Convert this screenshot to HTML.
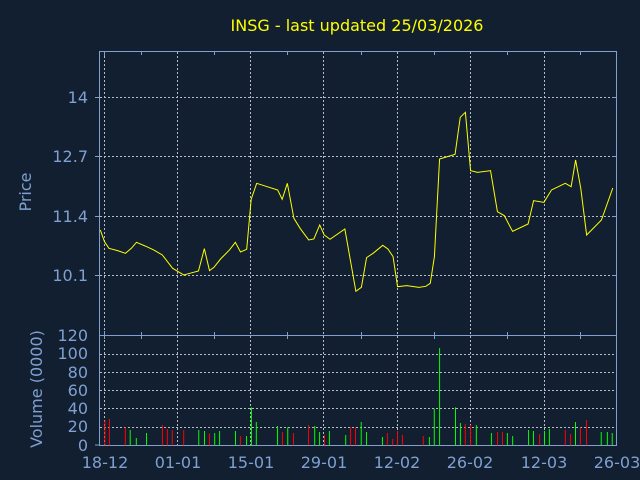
<!DOCTYPE html>
<html><head><meta charset="utf-8"><style>
html,body{margin:0;padding:0;background:#111f30;}
svg{display:block;}
text{font-family:"DejaVu Sans","Liberation Sans",sans-serif;}
</style></head><body>
<svg width="640" height="480" viewBox="0 0 640 480" xmlns="http://www.w3.org/2000/svg">
<rect width="640" height="480" fill="#111f30"/>
<text x="357" y="31" fill="#ffff00" font-size="16" text-anchor="middle">INSG - last updated 25/03/2026</text>
<!-- price grid -->
<g stroke="#b8bcc4" stroke-width="1" stroke-dasharray="2,2" fill="none">
<line x1="100" y1="97.5" x2="617" y2="97.5"/>
<line x1="100" y1="156.5" x2="617" y2="156.5"/>
<line x1="100" y1="216.5" x2="617" y2="216.5"/>
<line x1="100" y1="275.5" x2="617" y2="275.5"/>
<line x1="104.5" y1="52" x2="104.5" y2="335"/>
<line x1="177.5" y1="52" x2="177.5" y2="335"/>
<line x1="250.5" y1="52" x2="250.5" y2="335"/>
<line x1="323.5" y1="52" x2="323.5" y2="335"/>
<line x1="397.5" y1="52" x2="397.5" y2="335"/>
<line x1="470.5" y1="52" x2="470.5" y2="335"/>
<line x1="544.5" y1="52" x2="544.5" y2="335"/>
<line x1="100" y1="354.5" x2="617" y2="354.5"/>
<line x1="100" y1="372.5" x2="617" y2="372.5"/>
<line x1="100" y1="390.5" x2="617" y2="390.5"/>
<line x1="100" y1="408.5" x2="617" y2="408.5"/>
<line x1="100" y1="427.5" x2="617" y2="427.5"/>
<line x1="104.5" y1="320" x2="104.5" y2="445"/>
<line x1="177.5" y1="320" x2="177.5" y2="445"/>
<line x1="250.5" y1="320" x2="250.5" y2="445"/>
<line x1="323.5" y1="320" x2="323.5" y2="445"/>
<line x1="397.5" y1="320" x2="397.5" y2="445"/>
<line x1="470.5" y1="320" x2="470.5" y2="445"/>
<line x1="544.5" y1="320" x2="544.5" y2="445"/>
</g>
<rect x="99.5" y="51.5" width="517" height="284" fill="none" stroke="#7fa0d0" stroke-width="1"/>
<rect x="99.5" y="335.5" width="517" height="110" fill="none" stroke="#7fa0d0" stroke-width="1"/>
<g stroke="#7fa0d0" stroke-width="1">
<line x1="95" y1="97.5" x2="100" y2="97.5"/><line x1="95" y1="156.5" x2="100" y2="156.5"/><line x1="95" y1="216.5" x2="100" y2="216.5"/><line x1="95" y1="275.5" x2="100" y2="275.5"/>
<line x1="612" y1="97.5" x2="617" y2="97.5"/><line x1="612" y1="156.5" x2="617" y2="156.5"/><line x1="612" y1="216.5" x2="617" y2="216.5"/><line x1="612" y1="275.5" x2="617" y2="275.5"/>
<line x1="104.5" y1="52" x2="104.5" y2="56"/><line x1="141.5" y1="52" x2="141.5" y2="55"/><line x1="214.5" y1="52" x2="214.5" y2="55"/><line x1="287.5" y1="52" x2="287.5" y2="55"/><line x1="361.5" y1="52" x2="361.5" y2="55"/><line x1="434.5" y1="52" x2="434.5" y2="55"/><line x1="507.5" y1="52" x2="507.5" y2="55"/><line x1="580.5" y1="52" x2="580.5" y2="55"/>
<line x1="104.5" y1="331" x2="104.5" y2="339"/><line x1="141.5" y1="332" x2="141.5" y2="339"/><line x1="214.5" y1="332" x2="214.5" y2="339"/><line x1="287.5" y1="332" x2="287.5" y2="339"/><line x1="361.5" y1="332" x2="361.5" y2="339"/><line x1="434.5" y1="332" x2="434.5" y2="339"/><line x1="507.5" y1="332" x2="507.5" y2="339"/><line x1="580.5" y1="332" x2="580.5" y2="339"/>
<line x1="95" y1="445" x2="100" y2="445"/>
</g>
<g fill="#7fa0d0" font-size="16" text-anchor="end">
<text x="88" y="103">14</text>
<text x="88" y="162">12.7</text>
<text x="88" y="222">11.4</text>
<text x="88" y="281">10.1</text>
<text x="88" y="341">120</text>
<text x="88" y="359">100</text>
<text x="88" y="378">80</text>
<text x="88" y="396">60</text>
<text x="88" y="414">40</text>
<text x="88" y="432">20</text>
<text x="88" y="451">0</text>
</g>
<text transform="translate(31,192) rotate(-90)" fill="#7fa0d0" font-size="16" text-anchor="middle">Price</text>
<text transform="translate(42,389) rotate(-90)" fill="#7fa0d0" font-size="16" text-anchor="middle">Volume (0000)</text>
<g fill="#7fa0d0" font-size="16" text-anchor="middle">
<text x="105" y="468">18-12</text>
<text x="178" y="468">01-01</text>
<text x="251" y="468">15-01</text>
<text x="324" y="468">29-01</text>
<text x="397" y="468">12-02</text>
<text x="470" y="468">26-02</text>
<text x="544" y="468">12-03</text>
<text x="617" y="468">26-03</text>
</g>
<g transform="translate(90,40) scale(0.3444,0.3333)">
<polyline fill="none" stroke="#ffff00" stroke-width="1" vector-effect="non-scaling-stroke" points="30,570 42,605 55,625 80,632 103,640 120,625 135,607 160,618 185,630 210,645 240,685 272,705 290,700 315,693 332,626 347,692 360,682 380,656 405,630 422,607 437,636 455,628 468,478 484,430 545,450 558,478 573,430 592,535 610,565 635,600 650,597 667,555 680,585 697,598 740,567 772,754 788,742 803,653 822,640 850,616 865,627 880,650 893,740 920,737 955,742 975,739 988,730 1000,650 1015,357 1060,343 1075,232 1090,217 1105,392 1125,397 1163,392 1183,515 1203,527 1227,574 1272,552 1288,482 1318,487 1340,450 1380,430 1397,440 1410,360 1425,445 1442,585 1485,540 1518,444"/>
</g>
<g transform="translate(0,320) scale(0.40816,0.33333)" stroke-width="1" fill="none">
<g stroke="#ff0000">
<path vector-effect="non-scaling-stroke" d="M257,376V301M268,376V297M307,376V322M398,376V315M410,376V327M422,376V330M450,376V330M513,376V340M589,376V348M692,376V336M719,376V339M756,376V315M795,376V345M859,376V322M871,376V322M949,376V339M962,376V357M974,376V333M986,376V345M1037,376V348M1140,376V312M1153,376V315M1219,376V336M1231,376V336M1322,376V342M1385,376V330M1398,376V342M1422,376V322M1437,376V300"/>
</g>
<g stroke="#00ff00">
<path vector-effect="non-scaling-stroke" d="M319,376V330M334,376V354M359,376V339M487,376V330M501,376V333M526,376V339M538,376V333M577,376V333M604,376V348M616,376V262M628,376V306M680,376V318M705,376V322M771,376V318M783,376V336M807,376V333M847,376V345M885,376V306M898,376V336M937,376V351M1052,376V351M1064,376V266M1077,376V84M1116,376V262M1128,376V309M1167,376V315M1204,376V339M1243,376V339M1256,376V348M1295,376V330M1307,376V333M1334,376V333M1346,376V327M1410,376V306M1473,376V336M1488,376V336M1500,376V339"/>
</g>
</g>
</svg>
</body></html>
